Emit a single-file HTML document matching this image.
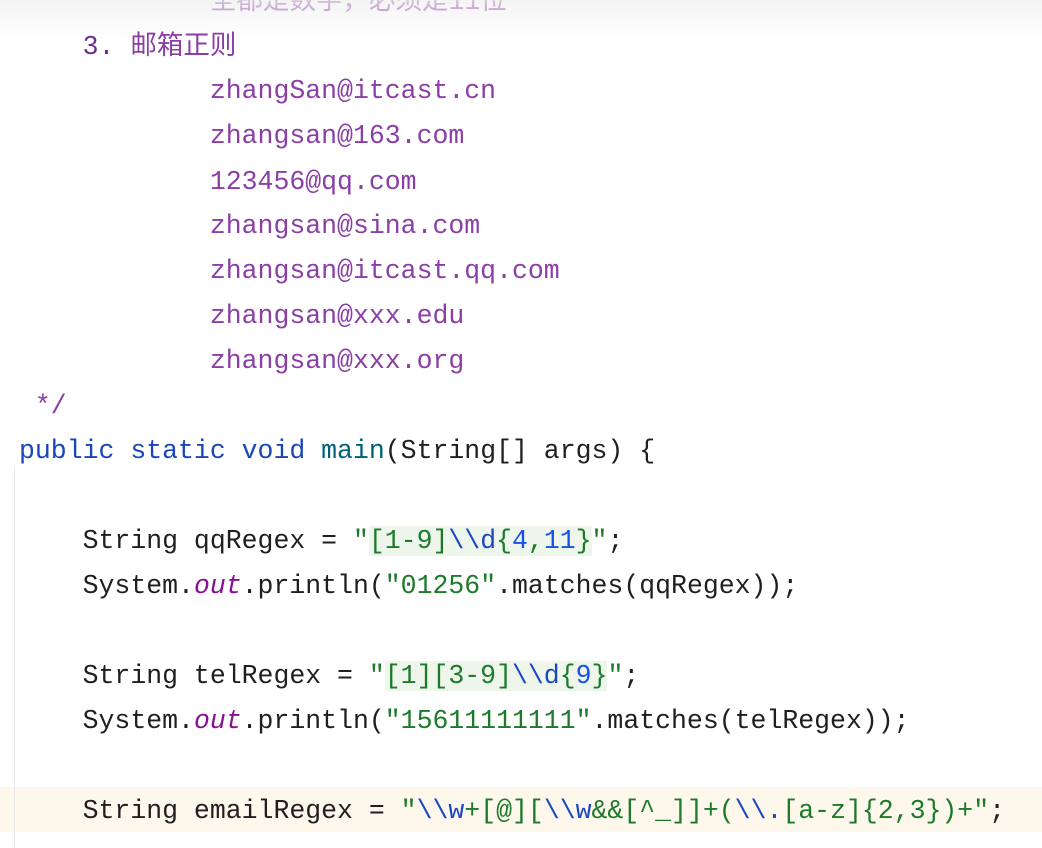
<!DOCTYPE html>
<html><head><meta charset="utf-8"><style>
html,body{margin:0;padding:0;background:#fff;width:1042px;height:848px;overflow:hidden;position:relative}
.l{position:absolute;left:19px;white-space:pre;font-family:"Liberation Mono","Noto Sans CJK SC",monospace;font-size:26.5px;line-height:45px;height:45px;color:#1f1f1f;letter-spacing:0}
.c{color:#8b3fa6}
.cb{color:#6e2f8c}
.k{color:#1a47b8}
.f{color:#00627a}
.s{color:#1c7a2a}
.e{color:#1a47c0}
.n{color:#1750eb}
.o{color:#871094;font-style:italic}
.inj{background:#eef6ec}
#fade{position:absolute;left:0;top:0;width:1042px;height:40px;background:linear-gradient(rgba(240,240,240,0.75),rgba(255,255,255,0.1))}
#cur{position:absolute;left:0;top:787px;width:1042px;height:45px;background:#fdf7ec}
#gut{position:absolute;left:14px;top:468px;width:1px;height:380px;background:#e8e8e8}
</style></head><body>
<div id="cur"></div>
<div id="gut"></div>
<div class="l c" style="top:-20px">            全都是数字，必须是11位</div>
<div id="fade"></div>
<div class="l c" style="top:25px">    <span class="cb">3.</span> 邮箱正则</div>
<div class="l c" style="top:69px">            zhangSan@itcast.cn</div>
<div class="l c" style="top:114px">            zhangsan@163.com</div>
<div class="l c" style="top:160px">            123456@qq.com</div>
<div class="l c" style="top:204px">            zhangsan@sina.com</div>
<div class="l c" style="top:249px">            zhangsan@itcast.qq.com</div>
<div class="l c" style="top:294px">            zhangsan@xxx.edu</div>
<div class="l c" style="top:339px">            zhangsan@xxx.org</div>
<div class="l c" style="top:384px"> */</div>
<div class="l" style="top:429px"><span class="k">public static void</span> <span class="f">main</span>(String[] args) {</div>
<div class="l" style="top:519px">    String qqRegex = <span class="s">"<span class="inj">[1-9]<span class="e">\\d</span>{<span class="n">4</span>,<span class="n">11</span>}</span>"</span>;</div>
<div class="l" style="top:564px">    System.<span class="o">out</span>.println(<span class="s">"01256"</span>.matches(qqRegex));</div>
<div class="l" style="top:654px">    String telRegex = <span class="s">"<span class="inj">[1][3-9]<span class="e">\\d</span>{<span class="n">9</span>}</span>"</span>;</div>
<div class="l" style="top:699px">    System.<span class="o">out</span>.println(<span class="s">"15611111111"</span>.matches(telRegex));</div>
<div class="l" style="top:789px">    String emailRegex = <span class="s">"<span class="e">\\w</span>+[@][<span class="e">\\w</span>&amp;&amp;[^_]]+(<span class="e">\\.</span>[a-z]{2,3})+"</span>;</div>
</body></html>
